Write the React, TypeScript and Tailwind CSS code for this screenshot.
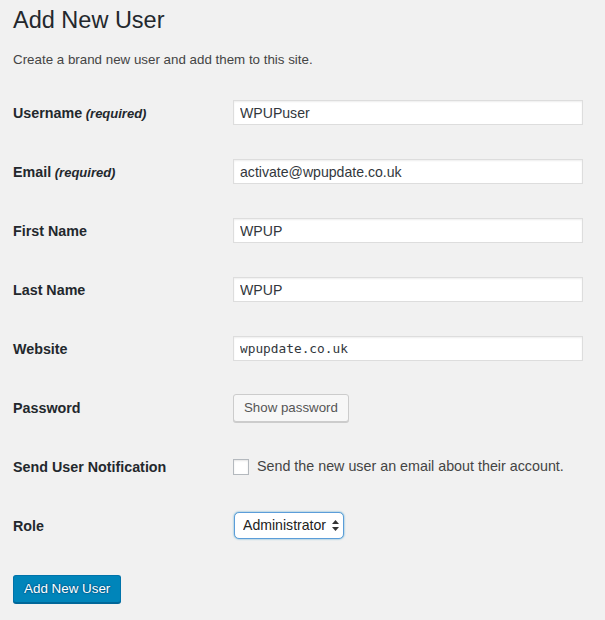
import { useState } from "react";

const FONT = "font-['Liberation_Sans','Helvetica_Neue',Arial,sans-serif]";

type Row = {
  label: string;
  required?: boolean;
  field: React.ReactNode;
};

function TextInput({ value, mono = false }: { value: string; mono?: boolean }) {
  return (
    <input
      type="text"
      defaultValue={value}
      className={
        "h-[25px] w-[350px] border border-[#dddddd] bg-white px-[6px] text-[#32373c] shadow-[inset_0_1px_2px_rgba(0,0,0,0.07)] outline-none " +
        (mono
          ? "font-['DejaVu_Sans_Mono','Liberation_Mono',monospace] text-[12.8px]"
          : "text-[14.1px]")
      }
    />
  );
}

export default function App() {
  const [notify, setNotify] = useState(false);

  const rows: Row[] = [
    { label: "Username", required: true, field: <TextInput value="WPUPuser" /> },
    { label: "Email", required: true, field: <TextInput value="activate@wpupdate.co.uk" /> },
    { label: "First Name", field: <TextInput value="WPUP" /> },
    { label: "Last Name", field: <TextInput value="WPUP" /> },
    { label: "Website", field: <TextInput value="wpupdate.co.uk" mono /> },
    {
      label: "Password",
      field: (
        <button
          type="button"
          className="h-[28px] rounded-[3px] border border-[#cccccc] bg-[#f7f7f7] px-[10px] text-[13.3px] text-[#555555] shadow-[0_1px_0_#cccccc]"
        >
          Show password
        </button>
      ),
    },
    {
      label: "Send User Notification",
      field: (
        <label className="flex items-center gap-[8px] text-[14.3px] text-[#444444]">
          <input
            type="checkbox"
            checked={notify}
            onChange={(e) => setNotify(e.target.checked)}
            className="h-[16px] w-[16px] appearance-none border border-[#b4b9be] bg-white shadow-[inset_0_1px_2px_rgba(0,0,0,0.1)]"
          />
          Send the new user an email about their account.
        </label>
      ),
    },
    {
      label: "Role",
      field: (
        <div className="relative ml-px w-[110px]">
          <select
            defaultValue="administrator"
            className="h-[27px] w-full appearance-none rounded-[5px] border border-[#5b9dd9] bg-white pl-[8px] text-[14.1px] text-[#222222] shadow-[0_0_2px_rgba(30,140,190,0.8)] outline-none"
          >
            <option value="subscriber">Subscriber</option>
            <option value="administrator">Administrator</option>
          </select>
          <svg
            className="pointer-events-none absolute right-[5px] top-[8px]"
            width="7"
            height="11"
            viewBox="0 0 7 11"
          >
            <path d="M3.5 0 L7 4 H0 Z" fill="#333333" />
            <path d="M3.5 11 L7 7 H0 Z" fill="#333333" />
          </svg>
        </div>
      ),
    },
  ];

  return (
    <div className={`min-h-[620px] w-full bg-[#f1f1f1] px-[13px] pt-[5px] ${FONT}`}>
      <h1 className="h-[30px] text-[23.5px] leading-[30px] font-normal text-[#23282d]">
        Add New User
      </h1>
      <p className="mt-[15px] text-[13.35px] leading-[20px] text-[#444444]">
        Create a brand new user and add them to this site.
      </p>

      <div className="mt-[13px]">
        {rows.map((row) => (
          <div key={row.label} className="flex h-[59px] items-center">
            <div className="w-[220px] shrink-0 pt-[2px] text-[14.3px] font-bold text-[#23282d]">
              {row.label}
              {row.required ? (
                <span className="text-[13px] italic"> (required)</span>
              ) : null}
            </div>
            {row.field}
          </div>
        ))}
      </div>

      <button
        type="button"
        className="mt-[20px] h-[28px] rounded-[3px] border border-[#0073aa] border-b-[#006799] bg-[#0085ba] px-[10px] text-[13.4px] text-white shadow-[0_1px_0_#006799] [text-shadow:0_-1px_1px_#006799,1px_0_1px_#006799,0_1px_1px_#006799,-1px_0_1px_#006799]"
      >
        Add New User
      </button>
    </div>
  );
}
